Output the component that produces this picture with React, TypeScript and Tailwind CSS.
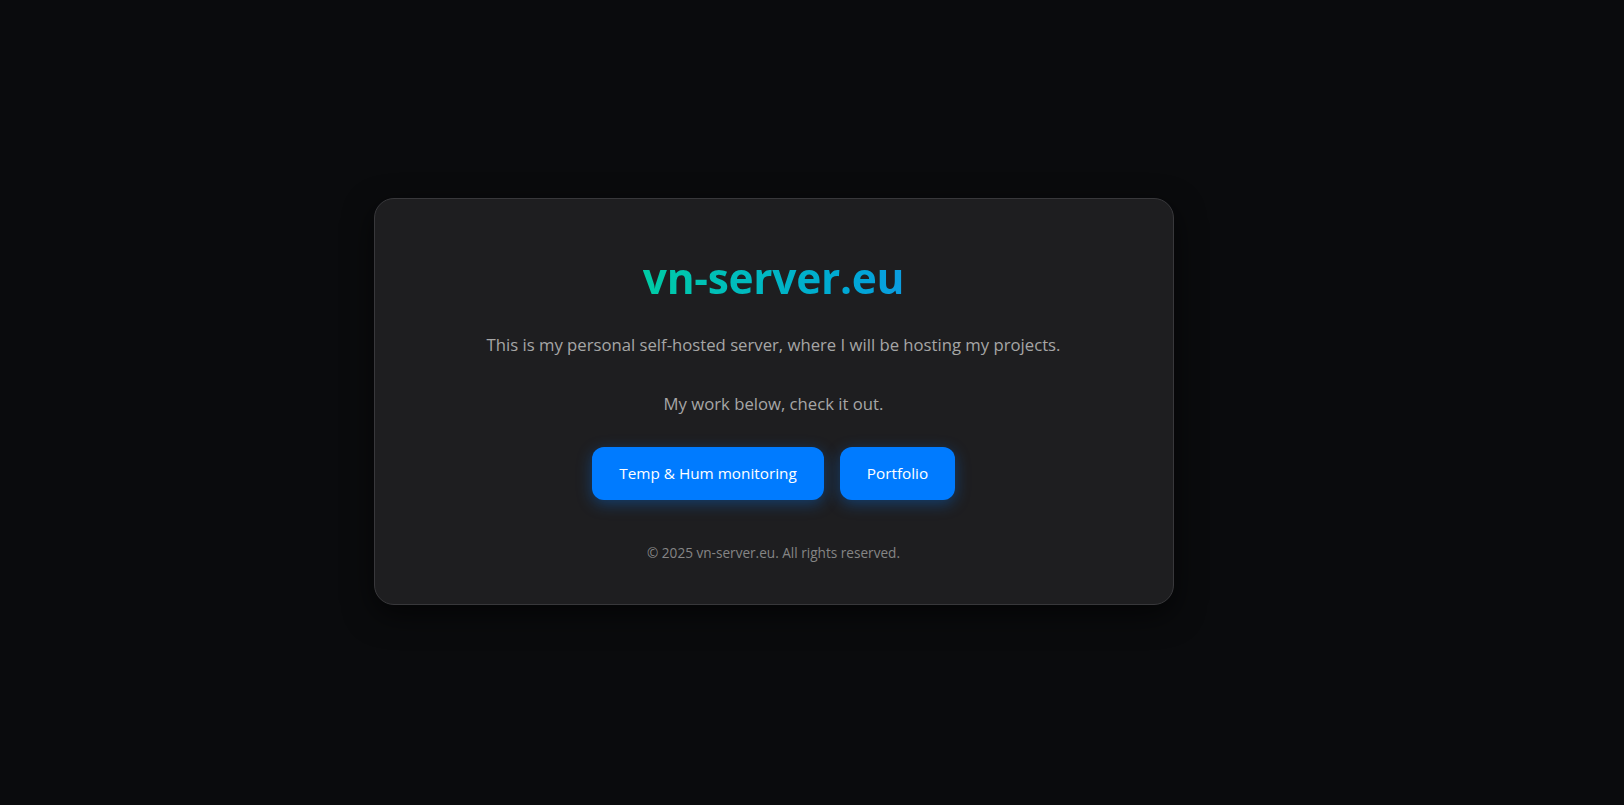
export default function App() {
  return (
    <div className="flex min-h-screen items-center justify-center bg-[#0a0b0d] font-['Open_Sans',_'Noto_Sans',_sans-serif]">
      <main className="mr-[77px] mb-[2px] w-[800px] rounded-[20px] border border-[#38383b] bg-[#1e1e20] px-12 pt-[54px] pb-[40px] text-center shadow-[0_10px_30px_rgba(0,0,0,0.6)]">
        <h1 className="mx-auto w-fit bg-gradient-to-r from-[#00cca5] to-[#0c9de0] bg-clip-text text-[42.5px] leading-[50px] font-bold tracking-[-0.3px] text-transparent">
          vn-server.eu
        </h1>
        <p className="mt-[28px] text-[16.7px] leading-[28px] text-[#a6a6a6]">
          This is my personal self-hosted server, where I will be hosting my projects.
        </p>
        <p className="mt-[31px] text-[16.7px] leading-[28px] text-[#a6a6a6]">My work below, check it out.</p>

        {/* Links */}
        <div className="mt-[29px] flex justify-center gap-4">
          <a
            href="#"
            className="flex h-[53px] w-[232px] items-center justify-center rounded-xl bg-[#007bff] text-[15.3px] text-white shadow-[0_4px_15px_rgba(0,123,255,0.35)]"
          >
            Temp &amp; Hum monitoring
          </a>
          <a
            href="#"
            className="flex h-[53px] w-[115px] items-center justify-center rounded-xl bg-[#007bff] text-[15.3px] text-white shadow-[0_4px_15px_rgba(0,123,255,0.35)]"
          >
            Portfolio
          </a>
        </div>

        <footer className="mt-[42px] text-[13.6px] leading-[22px] text-[#858585]">
          © 2025 vn-server.eu. All rights reserved.
        </footer>
      </main>
    </div>
  )
}
